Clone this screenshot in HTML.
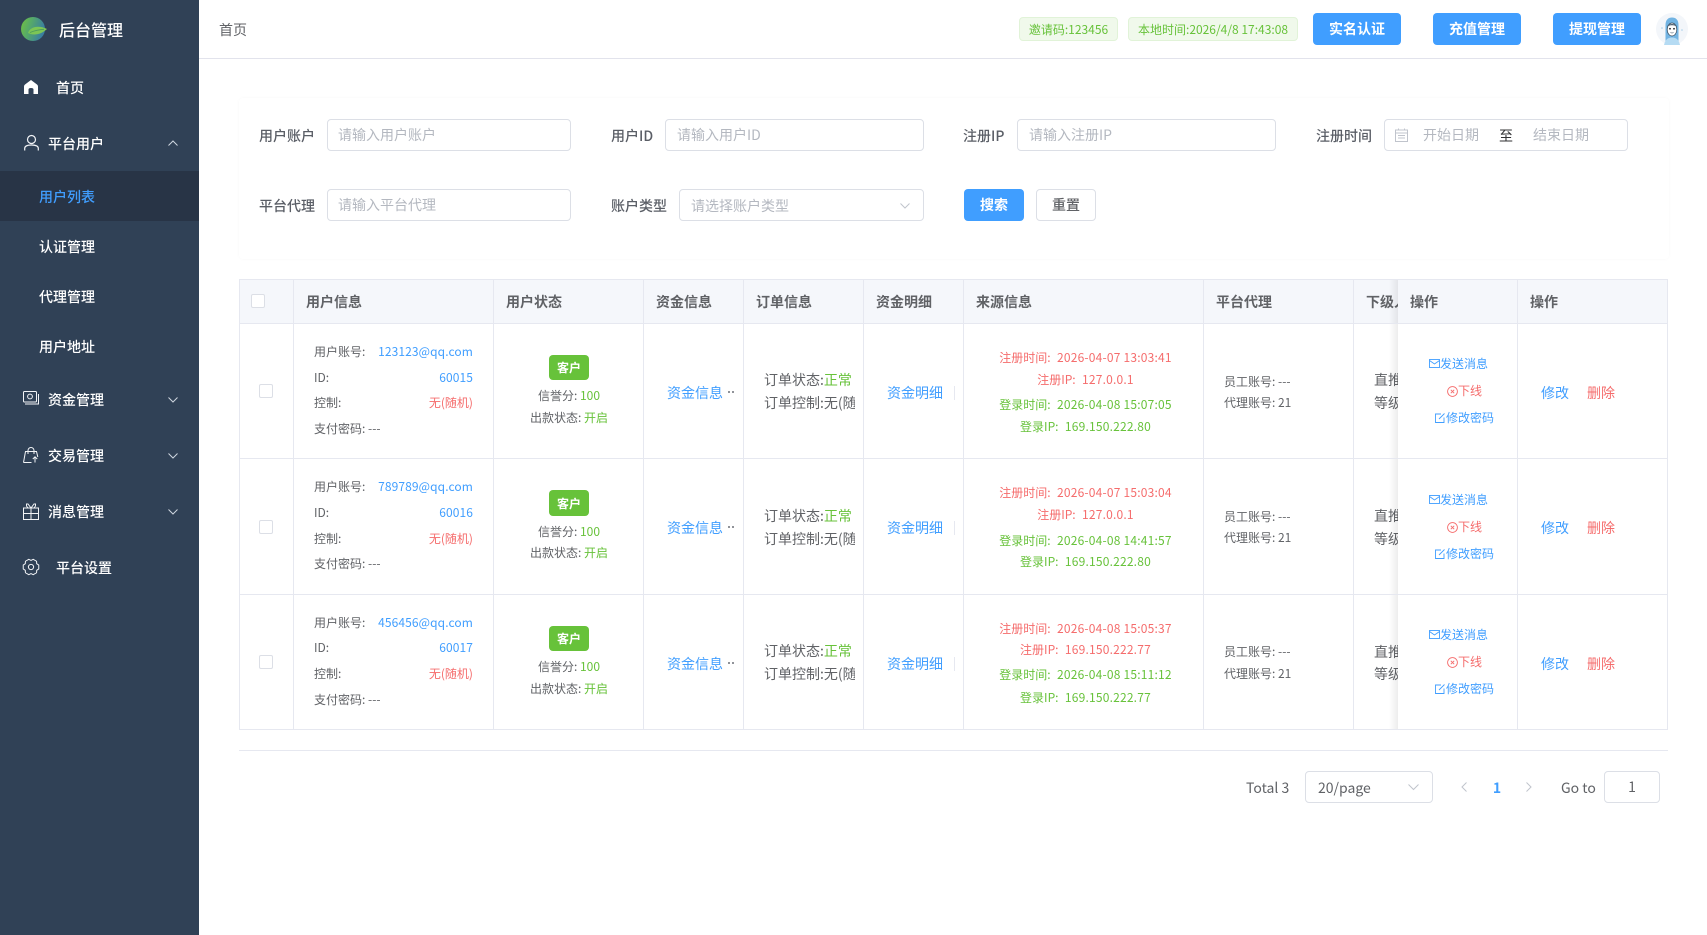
<!DOCTYPE html>
<html lang="zh-CN">
<head>
<meta charset="utf-8">
<title>后台管理</title>
<style>
*{box-sizing:border-box}
html,body{margin:0;padding:0;width:1707px;height:935px;overflow:hidden;background:#fff}
body{position:relative;font-family:"Noto Sans CJK SC","Liberation Sans",sans-serif;font-size:14px;color:#606266}
.t{position:absolute;white-space:nowrap;line-height:20px;height:20px}
.s{font-size:12px}
.c{text-align:center}
.rt{text-align:right}
.b{color:#409eff}.r{color:#f56c6c}.g{color:#67c23a}
.bx{position:absolute;background:#fff;border:1px solid #dcdfe6;border-radius:4px}
.ph{color:#b4b8c0}
.l{position:absolute;background:#e6e8f0}
#side{position:absolute;left:0;top:0;width:199px;height:935px;background:#304156}
#side .t{color:#fff;font-weight:500}
svg{position:absolute;overflow:visible}
.btn{position:absolute;background:#409eff;color:#fff;border-radius:4px;text-align:center;font-weight:700}
.tag{position:absolute;background:#f0f9eb;border:1px solid #e1f3d8;border-radius:4px;color:#67c23a;font-size:12px;text-align:center;line-height:23px;height:24px;top:17px}
.ct{position:absolute;background:#67c23a;color:#fff;border-radius:4px;font-size:12px;text-align:center;left:549px;width:40px;font-weight:700}
.cb{position:absolute;width:14px;height:14px;background:#fff;border:1px solid #dcdfe6;border-radius:2px}
.th{font-weight:700;color:#606266}
.lb{font-weight:500;color:#5a5e66}
.dot{position:absolute;width:2px;height:2px;background:#909399}
.clip{overflow:hidden}
.v{letter-spacing:.2px;margin-left:1px}
.e{letter-spacing:.1px}
</style>
</head>
<body>
<div id="side">
<svg style="left:0;top:0" width="60" height="60" viewBox="0 0 60 60"><defs><linearGradient id="lg" x1="0" y1="0" x2="1" y2="0.3"><stop offset="0" stop-color="#72c23f"/><stop offset="0.45" stop-color="#55a96a"/><stop offset="1" stop-color="#3a7f9f"/></linearGradient></defs><circle cx="33" cy="29" r="12" fill="url(#lg)"/><path d="M28 33 C30 26.500 39 25 47 29 C41 34.500 34 36 28 33Z" fill="#7cc655"/><path d="M30 32.500 C36 30 40 29.500 44 29.300" stroke="#4b9a5c" stroke-width=".8" fill="none"/></svg>
<div class="t" style="left:59px;top:19px;font-size:16px">后台管理</div>

<svg style="left:24px;top:80px" width="14" height="14" viewBox="0 0 14 14"><path d="M7 0 L13 4.5 Q14 5.3 14 6.5 V14 H9.5 V9.5 Q9.5 8 7 8 Q4.5 8 4.5 9.5 V14 H0 V6.5 Q0 5.3 1 4.5Z" fill="#fff"/></svg>
<div class="t" style="left:56px;top:78px">首页</div>

<svg style="left:24px;top:135px" width="15" height="16" viewBox="0 0 15 16" fill="none" stroke="#f2f4f7" stroke-width="1.2"><circle cx="7.5" cy="4.5" r="4"/><path d="M.7 15.500 V13.500 C.7 11 3.500 10 7.500 10 S14.300 11 14.300 13.500 V15.500"/></svg>
<div class="t" style="left:48px;top:134px">平台用户</div>
<svg style="left:168px;top:140px" width="10" height="6" viewBox="0 0 10 6" fill="none" stroke="#cfd6df" stroke-width="1"><path d="M.5 5.5 L5 1 L9.5 5.5"/></svg>

<div style="position:absolute;left:0;top:171px;width:199px;height:50px;background:#283446"></div>
<div class="t" style="left:39px;top:187px;color:#409eff">用户列表</div>
<div class="t" style="left:39px;top:237px">认证管理</div>
<div class="t" style="left:39px;top:287px">代理管理</div>
<div class="t" style="left:39px;top:337px">用户地址</div>

<svg style="left:23px;top:391px" width="16" height="15" viewBox="0 0 16 15" fill="none" stroke="#f2f4f7" stroke-width="1"><rect x=".5" y=".5" width="13" height="10.5" rx="1"/><circle cx="7" cy="5.5" r="2.4"/><path d="M2 13 H15.5 V3"/></svg>
<div class="t" style="left:48px;top:390px">资金管理</div>
<svg style="left:168px;top:397px" width="10" height="6" viewBox="0 0 10 6" fill="none" stroke="#cfd6df" stroke-width="1"><path d="M.5 .5 L5 5 L9.5 .5"/></svg>

<svg style="left:23px;top:447px" width="16" height="16" viewBox="0 0 16 16" fill="none" stroke="#f2f4f7" stroke-width="1"><path d="M.5 15.5 L2.5 4.5 H13.5 L14.8 10"/><path d="M5 7 V3.5 A3 3 0 0 1 11 3.5 V7"/><path d="M.5 15.5 H8.5"/><path d="M12 15.5 V10 M9.8 12 L12 9.8 L14.2 12"/></svg>
<div class="t" style="left:48px;top:446px">交易管理</div>
<svg style="left:168px;top:453px" width="10" height="6" viewBox="0 0 10 6" fill="none" stroke="#cfd6df" stroke-width="1"><path d="M.5 .5 L5 5 L9.5 .5"/></svg>

<svg style="left:23px;top:503px" width="16" height="17" viewBox="0 0 16 17" fill="none" stroke="#f2f4f7" stroke-width="1"><rect x=".5" y="5" width="15" height="11.5"/><path d="M8 5 V16.5 M.5 10.5 H15.5"/><path d="M8 5 L5 1 H3.5 L3.5 3 L5 5 M8 5 L11 1 H12.5 L12.5 3 L11 5"/></svg>
<div class="t" style="left:48px;top:502px">消息管理</div>
<svg style="left:168px;top:509px" width="10" height="6" viewBox="0 0 10 6" fill="none" stroke="#cfd6df" stroke-width="1"><path d="M.5 .5 L5 5 L9.5 .5"/></svg>

<svg style="left:23px;top:559px" width="16" height="16" viewBox="-8 -8 16 16" fill="none" stroke="#f2f4f7" stroke-width="1" stroke-linejoin="round"><path d="M0 -6.6 L2.2 -7.7 L5.56 -5.75 L5.7 -3.3 L7.76 -1.94 L7.76 1.94 L5.7 3.3 L5.56 5.75 L2.2 7.7 L0 6.6 L-2.2 7.7 L-5.56 5.75 L-5.7 3.3 L-7.76 1.94 L-7.76 -1.94 L-5.7 -3.3 L-5.56 -5.75 L-2.2 -7.7Z"/><circle r="2.6"/></svg>
<div class="t" style="left:56px;top:558px">平台设置</div>
</div>

<!-- header -->
<div class="l" style="left:199px;top:58px;width:1508px;height:1px;background:#e2e3ec"></div>
<div class="t" style="left:219px;top:20px">首页</div>
<div class="tag" style="left:1019px;width:99px">邀请码:123456</div>
<div class="tag" style="left:1128px;width:170px">本地时间:2026/4/8 17:43:08</div>
<div class="btn" style="left:1313px;top:13px;width:88px;height:32px;line-height:33px">实名认证</div>
<div class="btn" style="left:1433px;top:13px;width:88px;height:32px;line-height:33px">充值管理</div>
<div class="btn" style="left:1553px;top:13px;width:88px;height:32px;line-height:33px">提现管理</div>
<svg style="left:1656px;top:13px" width="32" height="32" viewBox="0 0 32 32"><circle cx="16" cy="16" r="16" fill="#f3f6fa"/><circle cx="6" cy="15" r=".8" fill="#a9cfe9"/><circle cx="26" cy="17" r=".8" fill="#a9cfe9"/><path d="M9.500 28 V12 C9.500 6.500 12.500 4.500 16 4.500 S22.500 6.500 22.500 12 V28Z" fill="#72b4e3"/><path d="M8 32 Q9.500 24.500 16 24.500 Q22.500 24.500 24 32Z" fill="#b5dbf3"/><ellipse cx="16" cy="16.500" rx="4.800" ry="6.500" fill="#fff" stroke="#33495c" stroke-width=".7"/><path d="M11.200 13 C13 10.500 19 10.500 20.800 13 C18 12 14 12 11.200 13Z" fill="#33495c"/><circle cx="14" cy="15.800" r=".9" fill="#222"/><circle cx="18" cy="15.800" r=".9" fill="#222"/><path d="M14.500 19.500 Q16 20.500 17.500 19.500" stroke="#33495c" stroke-width=".6" fill="none"/></svg>

<!-- filter card -->
<div style="position:absolute;left:239px;top:98px;width:1430px;height:161px;border-radius:4px;background:#fff;box-shadow:0 0 3px rgba(0,0,0,.03)"></div>
<div class="t lb" style="left:259px;top:126px">用户账户</div>
<div class="bx" style="left:327px;top:119px;width:244px;height:32px"></div>
<div class="t ph" style="left:338px;top:125px">请输入用户账户</div>
<div class="t lb" style="left:611px;top:126px">用户ID</div>
<div class="bx" style="left:665px;top:119px;width:259px;height:32px"></div>
<div class="t ph" style="left:677px;top:125px">请输入用户ID</div>
<div class="t lb" style="left:963px;top:126px">注册IP</div>
<div class="bx" style="left:1017px;top:119px;width:259px;height:32px"></div>
<div class="t ph" style="left:1029px;top:125px">请输入注册IP</div>
<div class="t lb" style="left:1316px;top:126px">注册时间</div>
<div class="bx" style="left:1384px;top:119px;width:244px;height:32px"></div>
<svg style="left:1395px;top:128px" width="13" height="14" viewBox="0 0 13 14" fill="none" stroke="#c0c4cc" stroke-width="1"><rect x=".5" y="2" width="12" height="11.500"/><path d="M.5 5 H12.500 M3 7.500 H10 M3 10 H10 M3.500 .5 V2 M9.500 .5 V2"/></svg>
<div class="t ph" style="left:1423px;top:125px">开始日期</div>
<div class="t" style="left:1499px;top:126px;color:#303133">至</div>
<div class="t ph" style="left:1533px;top:125px">结束日期</div>

<div class="t lb" style="left:259px;top:196px">平台代理</div>
<div class="bx" style="left:327px;top:189px;width:244px;height:32px"></div>
<div class="t ph" style="left:338px;top:195px">请输入平台代理</div>
<div class="t lb" style="left:611px;top:196px">账户类型</div>
<div class="bx" style="left:679px;top:189px;width:245px;height:32px"></div>
<div class="t ph" style="left:691px;top:196px">请选择账户类型</div>
<svg style="left:900px;top:203px" width="10" height="6" viewBox="0 0 10 6" fill="none" stroke="#c0c4cc" stroke-width="1"><path d="M.5 .5 L5 5 L9.5 .5"/></svg>
<div class="btn" style="left:964px;top:189px;width:60px;height:32px;line-height:33px">搜索</div>
<div class="bx" style="left:1036px;top:189px;width:60px;height:32px;text-align:center;line-height:31px;font-weight:500">重置</div>

<!-- table -->
<div style="position:absolute;left:239px;top:279px;width:1428px;height:44px;background:#f5f7fb"></div>
<div class="cb" style="left:251px;top:294px"></div>
<div class="t th" style="left:306px;top:292px">用户信息</div>
<div class="t th" style="left:506px;top:292px">用户状态</div>
<div class="t th" style="left:656px;top:292px">资金信息</div>
<div class="t th" style="left:756px;top:292px">订单信息</div>
<div class="t th" style="left:876px;top:292px">资金明细</div>
<div class="t th" style="left:976px;top:292px">来源信息</div>
<div class="t th" style="left:1216px;top:292px">平台代理</div>
<div class="t th" style="left:1366px;top:292px">下级人数</div>

<!-- row 1 -->
<div class="cb" style="left:259px;top:384px"></div>
<div class="t s" style="left:314px;top:342px">用户账号:</div><div class="t s b rt e" style="left:353px;width:120px;top:342px">123123@qq.com</div>
<div class="t s" style="left:314px;top:368px">ID:</div><div class="t s b rt e" style="left:353px;width:120px;top:368px">60015</div>
<div class="t s" style="left:314px;top:393px">控制:</div><div class="t s r rt" style="left:353px;width:120px;top:393px">无(随机)</div>
<div class="t s" style="left:314px;top:419px">支付密码: ---</div>
<div class="ct" style="top:355px;height:25px;line-height:26px">客户</div>
<div class="t s c" style="left:499px;width:140px;top:386px">信誉分: <span class="g">100</span></div>
<div class="t s c" style="left:499px;width:140px;top:408px">出款状态: <span class="g">开启</span></div>
<div class="t b" style="left:667px;top:383px">资金信息</div><div class="dot" style="left:728px;top:391px"></div><div class="dot" style="left:732px;top:391px"></div>
<div class="t clip" style="left:764px;width:91px;top:370px">订单状态:<span class="g">正常</span></div>
<div class="t clip" style="left:764px;width:91px;top:393px">订单控制:无(随机)</div>
<div class="t b" style="left:887px;top:383px">资金明细</div><div class="l" style="left:954px;top:386px;width:1px;height:14px"></div>
<div class="t s r c" style="left:963px;width:245px;top:348px">注册时间:&nbsp; <span class="v">2026-04-07 13:03:41</span></div>
<div class="t s r c" style="left:963px;width:245px;top:370px">注册IP:&nbsp; <span class="v">127.0.0.1</span></div>
<div class="t s g c" style="left:963px;width:245px;top:395px">登录时间:&nbsp; <span class="v">2026-04-08 15:07:05</span></div>
<div class="t s g c" style="left:963px;width:245px;top:417px">登录IP:&nbsp; <span class="v">169.150.222.80</span></div>
<div class="t s" style="left:1224px;top:372px">员工账号: ---</div>
<div class="t s" style="left:1224px;top:393px">代理账号: 21</div>
<div class="t" style="left:1374px;top:370px">直推人数</div>
<div class="t" style="left:1374px;top:393px">等级人数</div>

<!-- row 2 -->
<div class="cb" style="left:259px;top:520px"></div>
<div class="t s" style="left:314px;top:477px">用户账号:</div><div class="t s b rt e" style="left:353px;width:120px;top:477px">789789@qq.com</div>
<div class="t s" style="left:314px;top:503px">ID:</div><div class="t s b rt e" style="left:353px;width:120px;top:503px">60016</div>
<div class="t s" style="left:314px;top:529px">控制:</div><div class="t s r rt" style="left:353px;width:120px;top:529px">无(随机)</div>
<div class="t s" style="left:314px;top:554px">支付密码: ---</div>
<div class="ct" style="top:490px;height:26px;line-height:27px">客户</div>
<div class="t s c" style="left:499px;width:140px;top:522px">信誉分: <span class="g">100</span></div>
<div class="t s c" style="left:499px;width:140px;top:543px">出款状态: <span class="g">开启</span></div>
<div class="t b" style="left:667px;top:518px">资金信息</div><div class="dot" style="left:728px;top:526px"></div><div class="dot" style="left:732px;top:526px"></div>
<div class="t clip" style="left:764px;width:91px;top:506px">订单状态:<span class="g">正常</span></div>
<div class="t clip" style="left:764px;width:91px;top:529px">订单控制:无(随机)</div>
<div class="t b" style="left:887px;top:518px">资金明细</div><div class="l" style="left:954px;top:521px;width:1px;height:14px"></div>
<div class="t s r c" style="left:963px;width:245px;top:483px">注册时间:&nbsp; <span class="v">2026-04-07 15:03:04</span></div>
<div class="t s r c" style="left:963px;width:245px;top:505px">注册IP:&nbsp; <span class="v">127.0.0.1</span></div>
<div class="t s g c" style="left:963px;width:245px;top:531px">登录时间:&nbsp; <span class="v">2026-04-08 14:41:57</span></div>
<div class="t s g c" style="left:963px;width:245px;top:552px">登录IP:&nbsp; <span class="v">169.150.222.80</span></div>
<div class="t s" style="left:1224px;top:507px">员工账号: ---</div>
<div class="t s" style="left:1224px;top:528px">代理账号: 21</div>
<div class="t" style="left:1374px;top:506px">直推人数</div>
<div class="t" style="left:1374px;top:529px">等级人数</div>

<!-- row 3 -->
<div class="cb" style="left:259px;top:655px"></div>
<div class="t s" style="left:314px;top:613px">用户账号:</div><div class="t s b rt e" style="left:353px;width:120px;top:613px">456456@qq.com</div>
<div class="t s" style="left:314px;top:638px">ID:</div><div class="t s b rt e" style="left:353px;width:120px;top:638px">60017</div>
<div class="t s" style="left:314px;top:664px">控制:</div><div class="t s r rt" style="left:353px;width:120px;top:664px">无(随机)</div>
<div class="t s" style="left:314px;top:690px">支付密码: ---</div>
<div class="ct" style="top:626px;height:25px;line-height:26px">客户</div>
<div class="t s c" style="left:499px;width:140px;top:657px">信誉分: <span class="g">100</span></div>
<div class="t s c" style="left:499px;width:140px;top:679px">出款状态: <span class="g">开启</span></div>
<div class="t b" style="left:667px;top:654px">资金信息</div><div class="dot" style="left:728px;top:662px"></div><div class="dot" style="left:732px;top:662px"></div>
<div class="t clip" style="left:764px;width:91px;top:641px">订单状态:<span class="g">正常</span></div>
<div class="t clip" style="left:764px;width:91px;top:664px">订单控制:无(随机)</div>
<div class="t b" style="left:887px;top:654px">资金明细</div><div class="l" style="left:954px;top:657px;width:1px;height:14px"></div>
<div class="t s r c" style="left:963px;width:245px;top:619px">注册时间:&nbsp; <span class="v">2026-04-08 15:05:37</span></div>
<div class="t s r c" style="left:963px;width:245px;top:640px">注册IP:&nbsp; <span class="v">169.150.222.77</span></div>
<div class="t s g c" style="left:963px;width:245px;top:665px">登录时间:&nbsp; <span class="v">2026-04-08 15:11:12</span></div>
<div class="t s g c" style="left:963px;width:245px;top:688px">登录IP:&nbsp; <span class="v">169.150.222.77</span></div>
<div class="t s" style="left:1224px;top:642px">员工账号: ---</div>
<div class="t s" style="left:1224px;top:664px">代理账号: 21</div>
<div class="t" style="left:1374px;top:642px">直推人数</div>
<div class="t" style="left:1374px;top:664px">等级人数</div>

<!-- vertical lines behind fixed -->
<div class="l" style="left:239px;top:279px;width:1px;height:451px"></div>
<div class="l" style="left:293px;top:279px;width:1px;height:451px"></div>
<div class="l" style="left:493px;top:279px;width:1px;height:451px"></div>
<div class="l" style="left:643px;top:279px;width:1px;height:451px"></div>
<div class="l" style="left:743px;top:279px;width:1px;height:451px"></div>
<div class="l" style="left:863px;top:279px;width:1px;height:451px"></div>
<div class="l" style="left:963px;top:279px;width:1px;height:451px"></div>
<div class="l" style="left:1203px;top:279px;width:1px;height:451px"></div>
<div class="l" style="left:1353px;top:279px;width:1px;height:451px"></div>

<!-- fixed columns -->
<div style="position:absolute;left:1389px;top:279px;width:9px;height:451px;background:linear-gradient(to right,rgba(0,0,0,0),rgba(0,0,0,.07))"></div>
<div style="position:absolute;left:1398px;top:279px;width:269px;height:451px;background:#fff"></div>
<div style="position:absolute;left:1398px;top:279px;width:269px;height:44px;background:#f5f7fb"></div>
<div class="l" style="left:1517px;top:279px;width:1px;height:451px"></div>
<div class="l" style="left:1667px;top:279px;width:1px;height:451px"></div>
<div class="t th" style="left:1410px;top:292px">操作</div>
<div class="t th" style="left:1530px;top:292px">操作</div>

<svg style="left:1429px;top:359px" width="11" height="9" viewBox="0 0 11 9" fill="none" stroke="#409eff" stroke-width=".9"><rect x=".5" y=".5" width="10" height="8"/><path d="M.5 1.5 L5.5 5 L10.5 1.5"/></svg>
<div class="t s b" style="left:1440px;top:354px">发送消息</div>
<svg style="left:1447px;top:386px" width="11" height="11" viewBox="0 0 11 11" fill="none" stroke="#f56c6c" stroke-width=".9"><circle cx="5.5" cy="5.5" r="4.9"/><path d="M3.8 3.8 L7.2 7.2 M7.2 3.8 L3.8 7.2"/></svg>
<div class="t s r" style="left:1458px;top:381px">下线</div>
<svg style="left:1435px;top:413px" width="11" height="10" viewBox="0 0 11 10" fill="none" stroke="#409eff" stroke-width=".9"><path d="M6 1 H.5 V9.5 H9 V4.5"/><path d="M4 6 L9.5 .5"/></svg>
<div class="t s b" style="left:1446px;top:408px">修改密码</div>
<div class="t b" style="left:1541px;top:383px">修改</div><div class="t r" style="left:1587px;top:383px">删除</div>

<svg style="left:1429px;top:495px" width="11" height="9" viewBox="0 0 11 9" fill="none" stroke="#409eff" stroke-width=".9"><rect x=".5" y=".5" width="10" height="8"/><path d="M.5 1.5 L5.5 5 L10.5 1.5"/></svg>
<div class="t s b" style="left:1440px;top:490px">发送消息</div>
<svg style="left:1447px;top:522px" width="11" height="11" viewBox="0 0 11 11" fill="none" stroke="#f56c6c" stroke-width=".9"><circle cx="5.5" cy="5.5" r="4.9"/><path d="M3.8 3.8 L7.2 7.2 M7.2 3.8 L3.8 7.2"/></svg>
<div class="t s r" style="left:1458px;top:517px">下线</div>
<svg style="left:1435px;top:549px" width="11" height="10" viewBox="0 0 11 10" fill="none" stroke="#409eff" stroke-width=".9"><path d="M6 1 H.5 V9.5 H9 V4.5"/><path d="M4 6 L9.5 .5"/></svg>
<div class="t s b" style="left:1446px;top:544px">修改密码</div>
<div class="t b" style="left:1541px;top:518px">修改</div><div class="t r" style="left:1587px;top:518px">删除</div>

<svg style="left:1429px;top:630px" width="11" height="9" viewBox="0 0 11 9" fill="none" stroke="#409eff" stroke-width=".9"><rect x=".5" y=".5" width="10" height="8"/><path d="M.5 1.5 L5.5 5 L10.5 1.5"/></svg>
<div class="t s b" style="left:1440px;top:625px">发送消息</div>
<svg style="left:1447px;top:657px" width="11" height="11" viewBox="0 0 11 11" fill="none" stroke="#f56c6c" stroke-width=".9"><circle cx="5.5" cy="5.5" r="4.9"/><path d="M3.8 3.8 L7.2 7.2 M7.2 3.8 L3.8 7.2"/></svg>
<div class="t s r" style="left:1458px;top:652px">下线</div>
<svg style="left:1435px;top:684px" width="11" height="10" viewBox="0 0 11 10" fill="none" stroke="#409eff" stroke-width=".9"><path d="M6 1 H.5 V9.5 H9 V4.5"/><path d="M4 6 L9.5 .5"/></svg>
<div class="t s b" style="left:1446px;top:679px">修改密码</div>
<div class="t b" style="left:1541px;top:654px">修改</div><div class="t r" style="left:1587px;top:654px">删除</div>

<!-- horizontal lines -->
<div class="l" style="left:239px;top:279px;width:1429px;height:1px"></div>
<div class="l" style="left:239px;top:323px;width:1429px;height:1px"></div>
<div class="l" style="left:239px;top:458px;width:1429px;height:1px"></div>
<div class="l" style="left:239px;top:594px;width:1429px;height:1px"></div>
<div class="l" style="left:239px;top:729px;width:1429px;height:1px"></div>

<!-- pagination -->
<div class="l" style="left:239px;top:750px;width:1429px;height:1px"></div>
<div class="t" style="left:1246px;top:778px;font-size:14px">Total 3</div>
<div class="bx" style="left:1305px;top:771px;width:128px;height:32px"></div>
<div class="t" style="left:1318px;top:778px">20/page</div>
<svg style="left:1408px;top:784px" width="11" height="6" viewBox="0 0 11 6" fill="none" stroke="#c0c4cc" stroke-width="1"><path d="M.5 .5 L5.5 5.5 L10.500 .5"/></svg>
<svg style="left:1461px;top:782px" width="6" height="10" viewBox="0 0 6 10" fill="none" stroke="#c0c4cc" stroke-width="1"><path d="M5.5 .5 L1 5 L5.5 9.5"/></svg>
<div class="t b c" style="left:1487px;width:20px;top:778px;font-weight:700;font-size:14px">1</div>
<svg style="left:1526px;top:782px" width="6" height="10" viewBox="0 0 6 10" fill="none" stroke="#c0c4cc" stroke-width="1"><path d="M.5 .5 L5 5 L.5 9.5"/></svg>
<div class="t" style="left:1561px;top:778px">Go to</div>
<div class="bx c" style="left:1604px;top:771px;width:56px;height:32px;line-height:31px">1</div>
</body>
</html>
